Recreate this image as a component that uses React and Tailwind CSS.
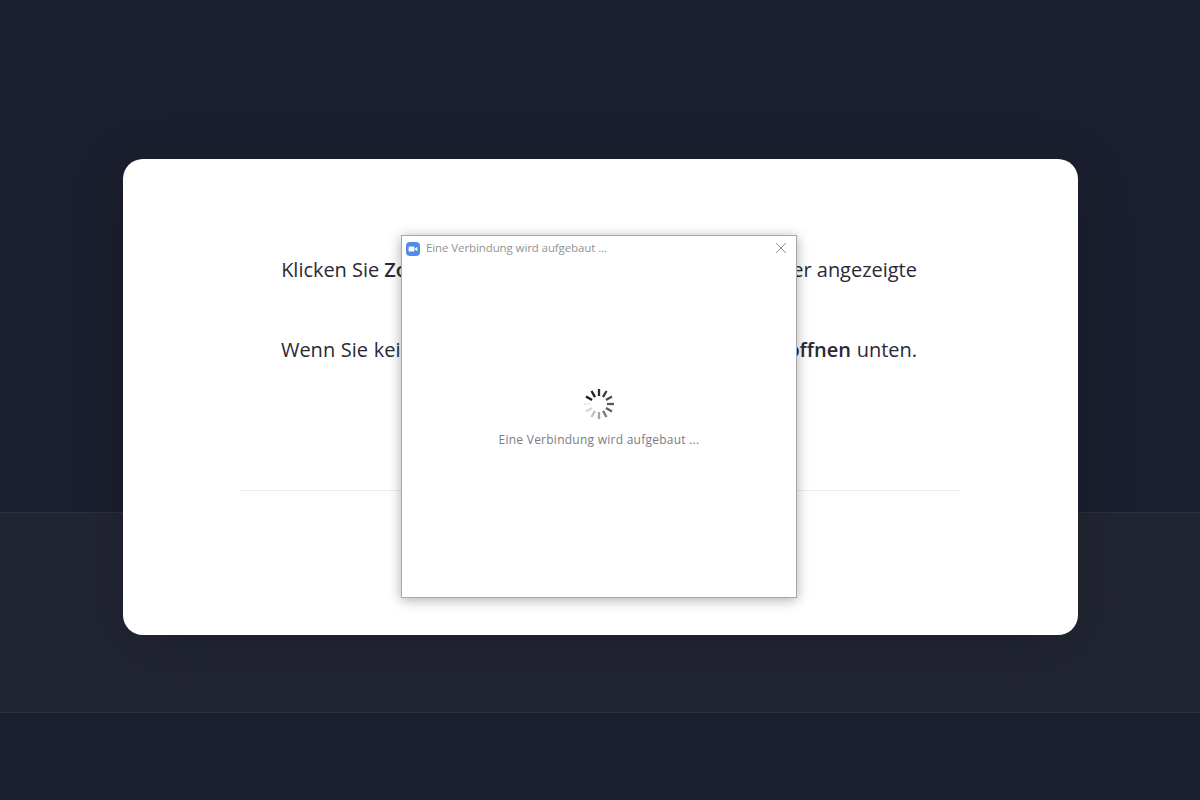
const spokes = [
  { deg: 0, color: "#2e2e2e" },
  { deg: 30, color: "#3a3a3a" },
  { deg: 60, color: "#4a4a4a" },
  { deg: 90, color: "#585858" },
  { deg: 120, color: "#5e5e5e" },
  { deg: 150, color: "#7a7a7a" },
  { deg: 180, color: "#a4a4a4" },
  { deg: 210, color: "#c0c0c0" },
  { deg: 240, color: "#d8d8d8" },
  { deg: 270, color: "#f0f0f0" },
  { deg: 300, color: "#1a1a1a" },
  { deg: 330, color: "#202020" },
];

function Spinner() {
  return (
    <svg width="34" height="34" viewBox="0 0 34 34" fill="none">
      {spokes.map((s) => (
        <line
          key={s.deg}
          x1="17"
          y1="9"
          x2="17"
          y2="2"
          stroke={s.color}
          strokeWidth="2.3"
          transform={`rotate(${s.deg} 17 17)`}
        />
      ))}
    </svg>
  );
}

function ZoomIcon() {
  return (
    <svg width="14" height="14" viewBox="0 0 14 14">
      <rect width="14" height="14" rx="4" fill="#4f8ce8" />
      <rect x="2.6" y="4.4" width="5.8" height="5.2" rx="1.2" fill="#fff" />
      <path d="M9 6.4 11.4 4.7V9.3L9 7.6Z" fill="#fff" />
    </svg>
  );
}

function ConnectDialog() {
  return (
    <div className="absolute left-[401px] top-[235px] flex h-[363px] w-[396px] flex-col border border-[#a8a8a8] bg-white shadow-[0_2px_12px_rgba(0,0,0,0.32)]">
      {/* Title bar */}
      <div className="flex h-[25px] items-center pl-[4px] pr-[9px]">
        <ZoomIcon />
        <span className="ml-[6px] -translate-y-px text-[11.5px] tracking-[-0.1px] text-[#939393]">Eine Verbindung wird aufgebaut ...</span>
        <svg className="ml-auto -translate-y-px" width="12" height="12" viewBox="0 0 12 12" stroke="#8e8e8e" strokeWidth="1" fill="none">
          <path d="M1 1 11 11M11 1 1 11" />
        </svg>
      </div>

      {/* Body */}
      <div className="flex flex-col items-center pt-[126px]">
        <Spinner />
        <p className="mt-[10px] text-[12px] tracking-[0.25px] text-[#7b7b85]">Eine Verbindung wird aufgebaut ...</p>
      </div>
    </div>
  );
}

export default function App() {
  return (
    <div
      className="relative h-[800px] w-[1200px] overflow-hidden bg-[#1c1f2f]"
      style={{ fontFamily: '"Open Sans", sans-serif' }}
    >
      {/* Page bands behind the card */}
      <div className="h-[512px]" />
      <div className="h-[201px] border-y border-[#2e3140] bg-[#222533]" />

      {/* Main card */}
      <div className="absolute left-[123px] top-[159px] h-[476px] w-[955px] rounded-[20px] bg-white px-[117px] pt-[95px] text-center text-[20px] text-[#2a2a36] shadow-[0_10px_60px_rgba(0,0,0,0.18)]">
        <p className="h-[31px] pr-[3px] leading-[31px] tracking-[-0.03px] whitespace-nowrap">
          Klicken Sie <strong className="font-semibold">Zoom Meetings öffnen</strong> auf dem vom Browser angezeigte
        </p>
        <p className="mt-[49px] h-[31px] pr-[3px] leading-[31px] whitespace-nowrap [word-spacing:0.45px]">
          Wenn Sie keinen Hinweis sehen, klicken Sie auf <strong className="font-semibold">Zoom öffnen</strong> unten.
        </p>
        <div className="mt-[125px] border-t border-[#ececec]" />
      </div>

      <ConnectDialog />
    </div>
  );
}
